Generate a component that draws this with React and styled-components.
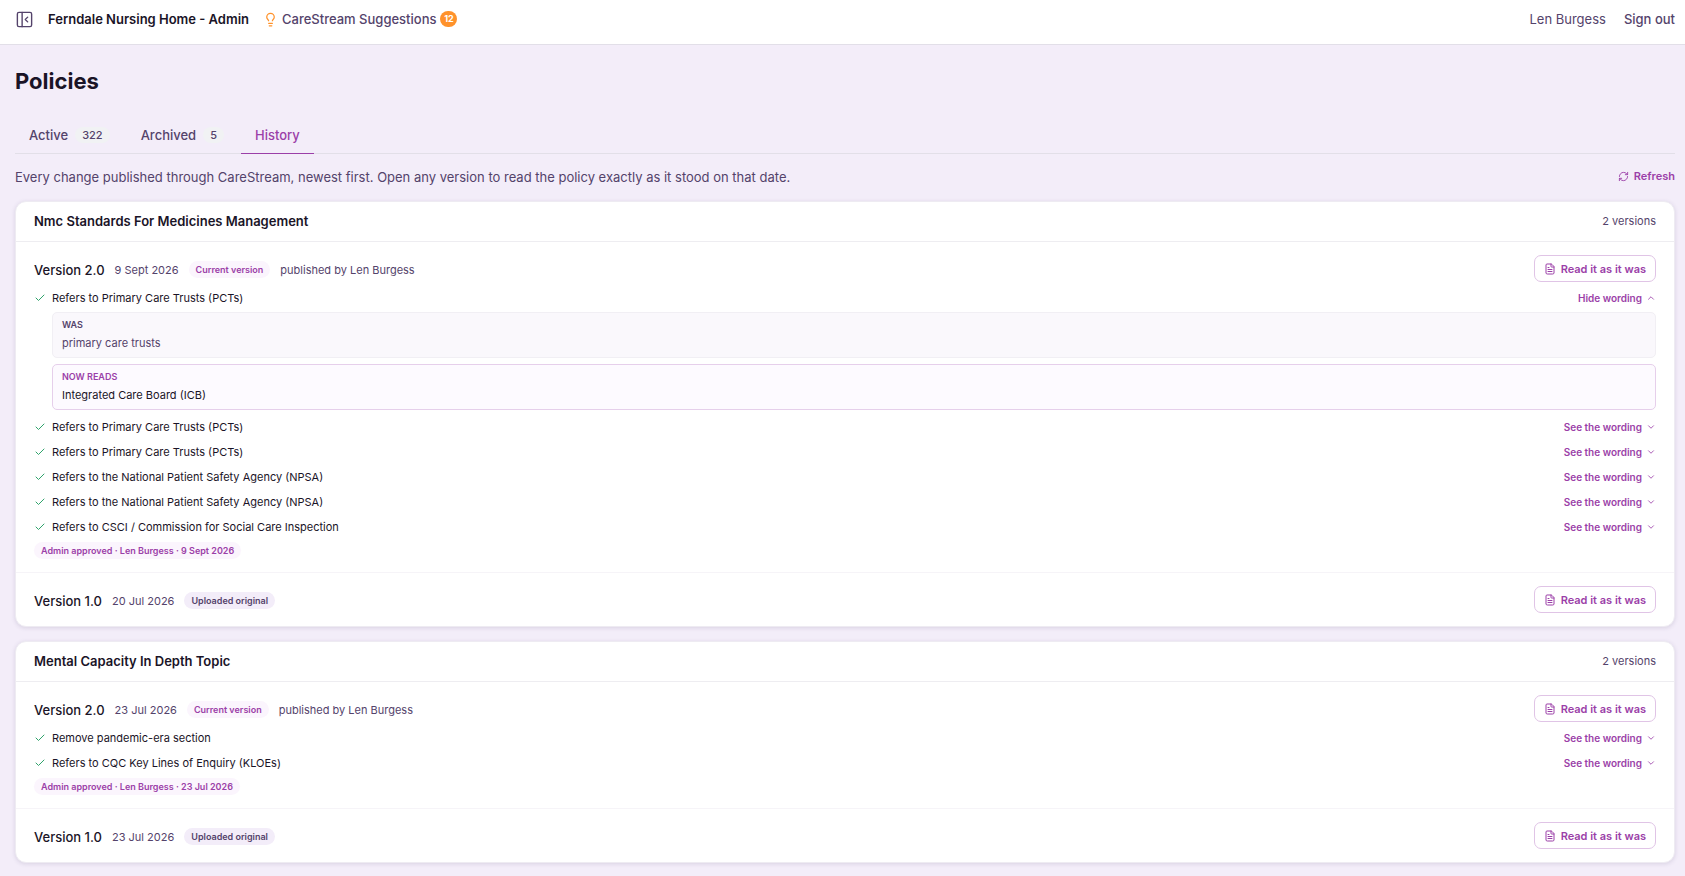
import React, { useState } from 'react';
import styled, { createGlobalStyle } from 'styled-components';
import { Check, ChevronDown, ChevronUp, FileText, Lightbulb, PanelLeftClose, RefreshCw } from 'lucide-react';

const tabs = [
    { id: 'active', label: 'Active', count: 322 },
    { id: 'archived', label: 'Archived', count: 5 },
    { id: 'history', label: 'History' }
];

const policies = [
    {
        id: 'nmc',
        title: 'Nmc Standards For Medicines Management',
        versions: [
            {
                number: '2.0',
                date: '9 Sept 2026',
                current: true,
                author: 'Len Burgess',
                approval: 'Admin approved · Len Burgess · 9 Sept 2026',
                changes: [
                    {
                        text: 'Refers to Primary Care Trusts (PCTs)',
                        was: 'primary care trusts',
                        now: 'Integrated Care Board (ICB)',
                        open: true
                    },
                    { text: 'Refers to Primary Care Trusts (PCTs)' },
                    { text: 'Refers to Primary Care Trusts (PCTs)' },
                    { text: 'Refers to the National Patient Safety Agency (NPSA)' },
                    { text: 'Refers to the National Patient Safety Agency (NPSA)' },
                    { text: 'Refers to CSCI / Commission for Social Care Inspection' }
                ]
            },
            { number: '1.0', date: '20 Jul 2026', changes: [] }
        ]
    },
    {
        id: 'mental',
        title: 'Mental Capacity In Depth Topic',
        versions: [
            {
                number: '2.0',
                date: '23 Jul 2026',
                current: true,
                author: 'Len Burgess',
                approval: 'Admin approved · Len Burgess · 23 Jul 2026',
                changes: [{ text: 'Remove pandemic-era section' }, { text: 'Refers to CQC Key Lines of Enquiry (KLOEs)' }]
            },
            { number: '1.0', date: '23 Jul 2026', changes: [] }
        ]
    }
];

function Change({ change }) {
    const [open, setOpen] = useState(Boolean(change.open));

    return (
        <li>
            <ChangeRow>
                <CheckIcon />
                <ChangeText>{change.text}</ChangeText>
                <WordingButton type='button' aria-expanded={open} onClick={() => setOpen(!open)}>
                    {open ? 'Hide wording' : 'See the wording'}
                    {open ? <ChevronUp size={10} /> : <ChevronDown size={10} />}
                </WordingButton>
            </ChangeRow>
            {open && change.was && (
                <Wording>
                    <WordingBox>
                        <WordingLabel>WAS</WordingLabel>
                        <p>{change.was}</p>
                    </WordingBox>
                    <WordingBox $now>
                        <WordingLabel>NOW READS</WordingLabel>
                        <p>{change.now}</p>
                    </WordingBox>
                </Wording>
            )}
        </li>
    );
}

function Version({ version }) {
    return (
        <VersionBlock>
            <VersionHead>
                <VersionInfo>
                    <VersionName>Version {version.number}</VersionName>
                    <Meta>{version.date}</Meta>
                    {version.current ? <Pill $accent>Current version</Pill> : <Pill>Uploaded original</Pill>}
                    {version.author && <Meta>published by {version.author}</Meta>}
                </VersionInfo>
                <ReadButton type='button'>
                    <FileText size={12} />
                    Read it as it was
                </ReadButton>
            </VersionHead>
            {version.changes.length > 0 && (
                <ChangeList>
                    {version.changes.map((change, index) => (
                        <Change key={index} change={change} />
                    ))}
                </ChangeList>
            )}
            {version.approval && <Pill $accent>{version.approval}</Pill>}
        </VersionBlock>
    );
}

function App() {
    const [tab, setTab] = useState('history');

    return (
        <>
            <GlobalStyle />
            <TopBar>
                <IconButton type='button' aria-label='Toggle sidebar'>
                    <PanelLeftClose size={19} strokeWidth={1.75} />
                </IconButton>
                <HomeName>Ferndale Nursing Home - Admin</HomeName>
                <Suggestions href='#suggestions'>
                    <Lightbulb size={15} />
                    CareStream Suggestions
                    <Count>12</Count>
                </Suggestions>
                <UserName>Len Burgess</UserName>
                <SignOut type='button'>Sign out</SignOut>
            </TopBar>
            <Main>
                <Title>Policies</Title>
                <Tabs role='tablist'>
                    {tabs.map((item) => (
                        <Tab key={item.id} type='button' role='tab' aria-selected={tab === item.id} $selected={tab === item.id} onClick={() => setTab(item.id)}>
                            {item.label}
                            {item.count && <TabCount>{item.count}</TabCount>}
                        </Tab>
                    ))}
                </Tabs>
                <Intro>
                    <p>Every change published through CareStream, newest first. Open any version to read the policy exactly as it stood on that date.</p>
                    <RefreshButton type='button'>
                        <RefreshCw size={11} />
                        Refresh
                    </RefreshButton>
                </Intro>
                <CardList>
                    {policies.map((policy) => (
                        <Card key={policy.id}>
                            <CardHead>
                                <h2>{policy.title}</h2>
                                <span>{policy.versions.length} versions</span>
                            </CardHead>
                            {policy.versions.map((version) => (
                                <Version key={version.number} version={version} />
                            ))}
                        </Card>
                    ))}
                </CardList>
            </Main>
        </>
    );
}

const GlobalStyle = createGlobalStyle`
    * {
        box-sizing: border-box;
    }
    body {
        margin: 0;
        background-color: #f3edf9;
        color: #1a1427;
        font-family: Inter, 'Liberation Sans', sans-serif;
        font-size: 11px;
        line-height: 16px;
    }
    h1, h2, p, ul {
        margin: 0;
        padding: 0;
    }
    ul {
        list-style: none;
    }
    button {
        padding: 0;
        border: none;
        background: none;
        font: inherit;
        cursor: pointer;
    }
    svg {
        flex-shrink: 0;
    }
`;

const TopBar = styled.header`
    display: flex;
    align-items: center;
    height: 45px;
    padding: 0 10px 6px 15px;
    border-bottom: 1px solid #e2dfe8;
    background-color: white;
    color: #54436b;
    font-size: 13px;
`;

const IconButton = styled.button`
    display: flex;
    color: #54436b;
`;

const HomeName = styled.span`
    margin-left: 14px;
    color: #1a1427;
    font-weight: 600;
`;

const Suggestions = styled.a`
    display: flex;
    align-items: center;
    gap: 4px;
    margin-left: 14px;
    color: inherit;
    font-weight: 500;
    text-decoration: none;

    svg {
        color: #ff922b;
    }
`;

const Count = styled.span`
    width: 17px;
    border-radius: 8px;
    background-color: #ff922b;
    color: white;
    font-size: 9px;
    font-weight: 700;
    text-align: center;
`;

const UserName = styled.span`
    margin-left: auto;
`;

const SignOut = styled.button`
    margin-left: 18px;
    color: inherit;
    font-weight: 500;
`;

const Main = styled.main`
    padding: 20px 10px 12px 15px;
`;

const Title = styled.h1`
    font-size: 22px;
    font-weight: 700;
    line-height: 32px;
`;

const Tabs = styled.div`
    display: flex;
    gap: 3px;
    margin-top: 20px;
    border-bottom: 1px solid #e2dfe8;
`;

const Tab = styled.button`
    display: flex;
    align-items: center;
    gap: 7px;
    height: 37px;
    margin-bottom: -1px;
    padding: 0 14px;
    border-bottom: 1px solid ${(props) => (props.$selected ? '#9b3fa8' : 'transparent')};
    color: ${(props) => (props.$selected ? '#9b3fa8' : '#54436b')};
    font-size: 13px;
    font-weight: 500;
`;

const TabCount = styled.span`
    padding: 0 7px;
    border-radius: 8px;
    background-color: #f1f2f4;
    color: #54436b;
    font-size: 11px;
`;

const Intro = styled.div`
    display: flex;
    justify-content: space-between;
    align-items: flex-start;
    padding: 12px 0;
    color: #54436b;

    p {
        font-size: 13px;
        line-height: 23px;
    }
`;

const RefreshButton = styled.button`
    display: flex;
    align-items: center;
    gap: 5px;
    color: #9b3fa8;
    font-weight: 600;
    line-height: 20px;
`;

const CardList = styled.div`
    display: flex;
    flex-direction: column;
    gap: 14px;
`;

const Card = styled.section`
    border: 1px solid #eeebf2;
    border-radius: 11px;
    background-color: white;
    box-shadow: 0 1px 4px rgba(60, 40, 90, 0.14);
`;

const CardHead = styled.div`
    display: flex;
    align-items: center;
    justify-content: space-between;
    height: 40px;
    padding: 0 18px 1px;
    border-bottom: 1px solid #eeedf1;

    h2 {
        font-size: 13px;
        font-weight: 600;
    }
    span {
        color: #54436b;
    }
`;

const VersionBlock = styled.div`
    padding: 13px 18px;

    & + & {
        border-top: 1px solid #f6f4f8;
    }
`;

const VersionHead = styled.div`
    display: flex;
    align-items: center;
    justify-content: space-between;
`;

const VersionInfo = styled.div`
    display: flex;
    align-items: center;
    gap: 10px;
    padding-top: 2px;
`;

const VersionName = styled.span`
    font-size: 13px;
    font-weight: 500;
`;

const Meta = styled.span`
    color: #54436b;
`;

const Pill = styled.span`
    display: block;
    width: fit-content;
    padding: 0 7px;
    border-radius: 9px;
    background-color: ${(props) => (props.$accent ? '#fbf5fd' : '#f3edf9')};
    color: ${(props) => (props.$accent ? '#9b3fa8' : '#54436b')};
    font-size: 9px;
    font-weight: 600;
    line-height: 17px;
`;

const ReadButton = styled.button`
    display: flex;
    align-items: center;
    gap: 5px;
    height: 27px;
    padding: 0 9px;
    border: 1px solid #e0c4e6;
    border-radius: 7px;
    color: #9b3fa8;
    font-weight: 600;
`;

const ChangeList = styled.ul`
    display: flex;
    flex-direction: column;
    gap: 9px;
    padding: 8px 0 7px;
`;

const ChangeRow = styled.div`
    display: flex;
    align-items: center;
`;

const CheckIcon = styled(Check)`
    width: 12px;
    height: 12px;
    color: #2fa36b;
`;

const ChangeText = styled.span`
    flex: 1;
    margin-left: 6px;
`;

const WordingButton = styled.button`
    display: flex;
    align-items: center;
    gap: 4px;
    color: #9b3fa8;
    font-size: 10px;
    font-weight: 600;
`;

const Wording = styled.div`
    display: flex;
    flex-direction: column;
    gap: 6px;
    margin: 6px 0 0 18px;
`;

const WordingBox = styled.div`
    padding: 4px 9px;
    border: 1px solid ${(props) => (props.$now ? '#e6cfeb' : '#f1eff4')};
    border-radius: 5px;
    background-color: ${(props) => (props.$now ? '#fdfaff' : '#faf8fc')};
    color: ${(props) => (props.$now ? '#9b3fa8' : '#54436b')};

    p {
        color: ${(props) => (props.$now ? '#1a1427' : '#54436b')};
        line-height: 20px;
    }
`;

const WordingLabel = styled.div`
    font-size: 9px;
    font-weight: 600;
`;

export default App;
